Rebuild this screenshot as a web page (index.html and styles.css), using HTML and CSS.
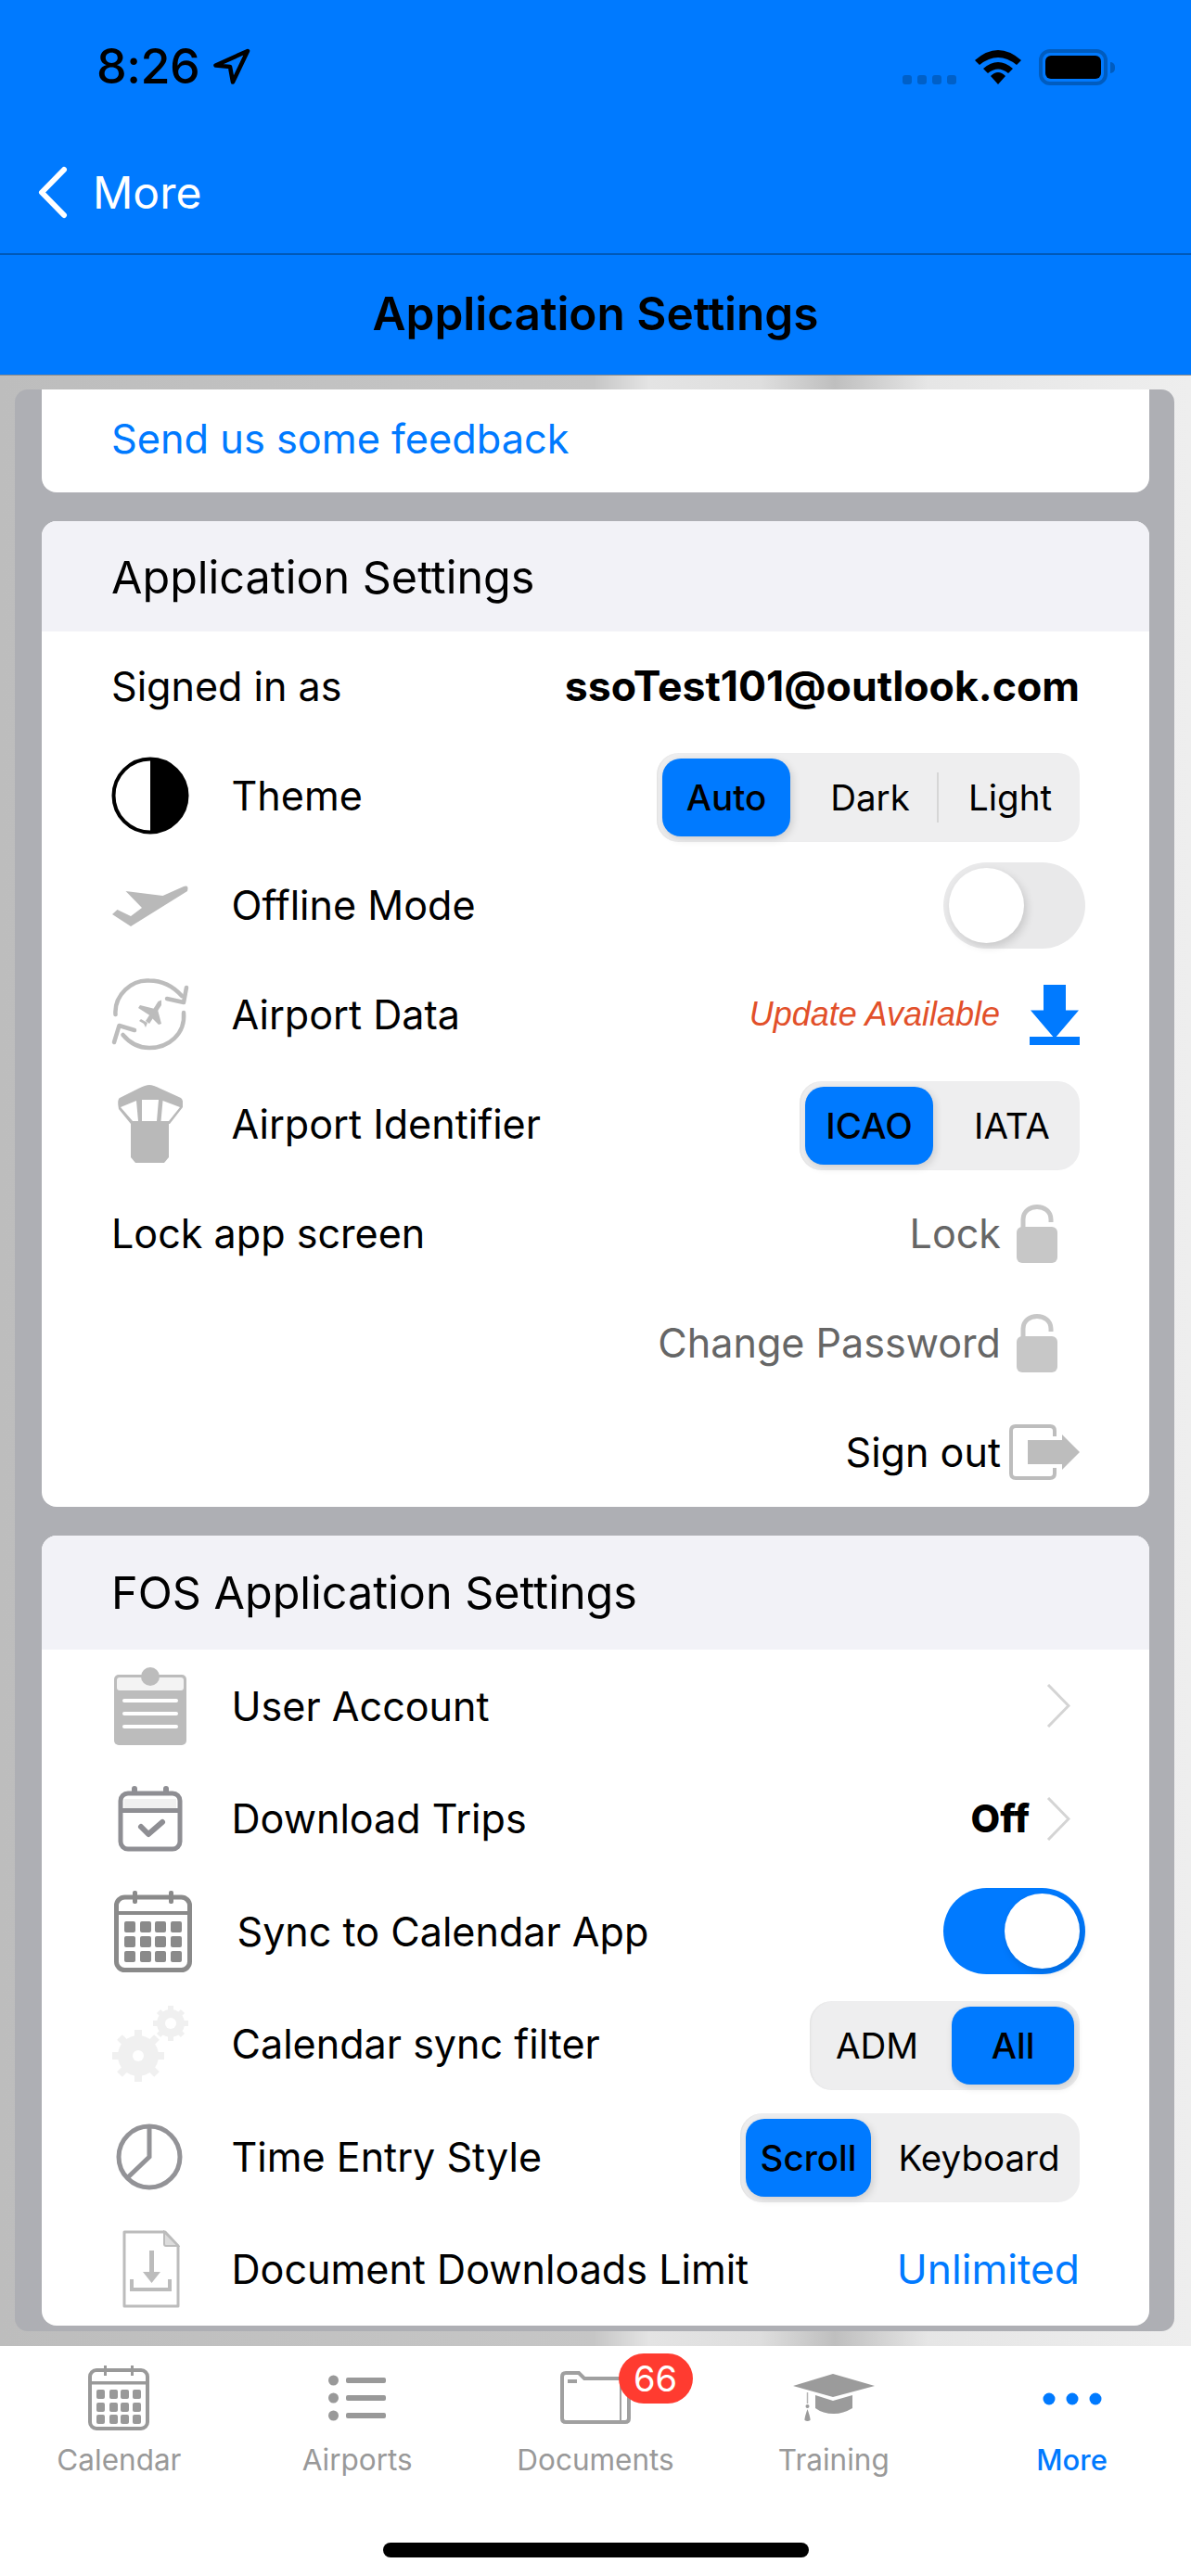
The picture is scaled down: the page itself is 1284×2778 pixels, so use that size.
FILE: index.html
```html
<!DOCTYPE html>
<html lang="en">
<head>
<meta charset="utf-8">
<title>Application Settings</title>
<link rel="stylesheet" href="styles.css">
</head>
<body>
<div class="phone">
  <header class="header">
    <div class="status">
      <div class="time-group">
        <span class="time">8:26</span>
        <svg class="loc" viewBox="0 0 40 40"><path d="M37 3 L2.500 18.500 L18 20 L21 36.500 Z" fill="none" stroke="#000" stroke-width="4.500" stroke-linejoin="round"/></svg>
      </div>
      <div class="status-right">
        <div class="cell"><i></i><i></i><i></i><i></i></div>
        <svg class="wifi" viewBox="0 0 50 37"><path d="M0 11 Q25 -11 50 11 L45 16 Q25 0 5 16 Z M9 20 Q25 6 41 20 L36 25 Q25 16 14 25 Z M17 28 Q25 20 33 28 L25 37 Z" fill="#000"/></svg>
        <div class="battery"><div class="battery-fill"></div></div>
        <div class="battery-cap"></div>
      </div>
    </div>
    <div class="nav">
      <svg class="back" viewBox="0 0 33 57"><path d="M29 4 L5 28.5 L29 53" fill="none" stroke="#fff" stroke-width="6" stroke-linecap="round" stroke-linejoin="round"/></svg>
      <span class="back-label">More</span>
    </div>
    <div class="title-bar">Application Settings</div>
  </header>

  <main class="content">
    <div class="panel">
      <section class="card card-first">
        <div class="feedback">Send us some feedback</div>
      </section>

      <section class="card card-app">
        <h2 class="card-head">Application Settings</h2>
        <div class="row">
          <span class="label">Signed in as</span>
          <span class="email">ssoTest101@outlook.com</span>
        </div>
        <div class="row">
          <span class="ico"><svg class="i-theme" viewBox="0 0 84 84"><circle cx="42" cy="42" r="39.5" fill="#fff" stroke="#000" stroke-width="4"/><path d="M42 2 A40 40 0 0 1 42 82 Z" fill="#000"/></svg></span>
          <span class="label">Theme</span>
          <div class="seg seg-theme">
            <span class="pill p-auto">Auto</span>
            <span class="opt o-dark">Dark</span>
            <span class="divider"></span>
            <span class="opt o-light">Light</span>
          </div>
        </div>
        <div class="row">
          <span class="ico"><svg class="i-plane" viewBox="120 953 84 45"><path d="M121 985 L126.500 980 L141 987 L153 978 L135.500 960 L175.500 965 L198 955 Q204 953 202 960 L141 998 Z" fill="#b9b9b9"/></svg></span>
          <span class="label">Offline Mode</span>
          <div class="toggle"><span class="knob"></span></div>
        </div>
        <div class="row">
          <span class="ico"><svg class="i-data" viewBox="0 0 84 78"><g fill="none" stroke="#bcbcbc" stroke-width="4.500" stroke-linecap="round" stroke-linejoin="round"><path d="M4.500 39 C3 18 22 1 41 2.500 C55 2.500 67 9 76 19"/><path d="M81 10 L78 26 L60 22"/><path d="M78 37 C80 60 62 75 41 75 C30 75 20 70 12.500 61"/><path d="M3 69 L8.500 51 L25 56"/></g><g fill="#bcbcbc"><path d="M50.500 25 L54 23.500 L54 29 L41 49 L37 46 Z"/><path d="M29 32 L31 29 L47 33 L43 41 Z"/><path d="M54 49 L51 50 L43 42 L50 34 Z"/><path d="M30 46 L32 44 L39 48 L37 53 L35 49 Z"/></g></svg></span>
          <span class="label">Airport Data</span>
          <span class="update">Update Available</span>
          <svg class="i-dl" viewBox="0 0 54 65"><path d="M15 0 H39 V29 H53 L27 61 L1 29 H15 Z" transform="scale(1 .95)" fill="#007aff"/><rect y="56" width="54" height="9" fill="#007aff"/></svg>
        </div>
        <div class="row">
          <span class="ico"><svg class="i-tower" viewBox="0 0 70 84"><path d="M34 0 Q38 0 46 4 L68 14 Q71 16 70 24 L56 42 H14 L1 26 Q-1 16 2 14 L22 4 Q30 0 34 0 Z" fill="#b9b9b9"/><path d="M3 24 L20 17 L22 39 L16 39 Z M26 16 H44 L42 39 H26 Z M48.500 17 L67 24 L55 39 L46.500 39 Z" fill="#fff"/><path d="M14 42 H55 V78 L50 84 H19 L14 78 Z" fill="#b9b9b9"/></svg></span>
          <span class="label">Airport Identifier</span>
          <div class="seg seg-air">
            <span class="pill p-icao">ICAO</span>
            <span class="opt o-iata">IATA</span>
          </div>
        </div>
        <div class="row">
          <span class="label">Lock app screen</span>
          <span class="muted">Lock</span>
          <svg class="i-lock" viewBox="0 0 44 64"><path d="M7 28 V17 C7 -1 37 -1 37 17 V20" fill="none" stroke="#c7c7c7" stroke-width="5"/><rect y="25" width="44" height="39" rx="6" fill="#c7c7c7"/></svg>
        </div>
        <div class="row">
          <span class="muted">Change Password</span>
          <svg class="i-lock" viewBox="0 0 44 64"><path d="M7 28 V17 C7 -1 37 -1 37 17 V20" fill="none" stroke="#c7c7c7" stroke-width="5"/><rect y="25" width="44" height="39" rx="6" fill="#c7c7c7"/></svg>
        </div>
        <div class="row">
          <span class="signout">Sign out</span>
          <svg class="i-out" viewBox="0 0 76 60"><path d="M49 13 V7 Q49 2 44 2 H7 Q2 2 2 7 V53 Q2 58 7 58 H44 Q49 58 49 53 V47" fill="none" stroke="#bdbdbd" stroke-width="4"/><path d="M20 17 H57 V11 L76 30 L57 49 V43 H20 Z" fill="#bdbdbd"/></svg>
        </div>
      </section>

      <section class="card card-fos">
        <h2 class="card-head head-fos">FOS Application Settings</h2>
        <div class="row row-fos">
          <span class="ico"><svg class="i-user" viewBox="0 0 78 84"><rect y="8" width="78" height="76" rx="5" fill="#bcbcbc"/><rect x="3" y="11" width="72" height="14" rx="3" fill="#f3f3f3"/><circle cx="39" cy="10" r="10" fill="#bcbcbc"/><rect x="9" y="34" width="60" height="4" rx="2" fill="#fff"/><rect x="9" y="48" width="60" height="4" rx="2" fill="#fff"/><rect x="9" y="62" width="60" height="4" rx="2" fill="#fff"/></svg></span>
          <span class="label">User Account</span>
          <svg class="i-chev" viewBox="0 0 26 47"><path d="M2 1 L24 23.500 L2 46" fill="none" stroke="#d4d4d4" stroke-width="3"/></svg>
        </div>
        <div class="row row-fos">
          <span class="ico"><svg class="i-trips" viewBox="0 0 70 71"><rect x="3" y="8" width="64" height="60" rx="8" fill="#fff" stroke="#8e8e93" stroke-width="5"/><rect x="7" y="14" width="56" height="10" fill="#f0f0f0"/><rect x="3" y="24" width="64" height="5" fill="#8e8e93"/><rect x="15" y="0" width="6" height="10" rx="3" fill="#8e8e93"/><rect x="49" y="0" width="6" height="10" rx="3" fill="#8e8e93"/><path d="M25 44 L33 52 L48 39" fill="none" stroke="#8e8e93" stroke-width="6" stroke-linecap="round" stroke-linejoin="round"/></svg></span>
          <span class="label">Download Trips</span>
          <span class="off">Off</span>
          <svg class="i-chev" viewBox="0 0 26 47"><path d="M2 1 L24 23.500 L2 46" fill="none" stroke="#d4d4d4" stroke-width="3"/></svg>
        </div>
        <div class="row row-fos">
          <span class="ico"><svg class="i-cal" viewBox="0 0 84 88"><rect x="2.500" y="7" width="79" height="78.500" rx="9" fill="#fff" stroke="#8a8a8a" stroke-width="5"/><rect x="2" y="22" width="80" height="4" fill="#8a8a8a"/><rect x="20" y="0" width="5" height="14" rx="2" fill="#8a8a8a"/><rect x="59" y="0" width="5" height="14" rx="2" fill="#8a8a8a"/><g fill="#8a8a8a"><rect x="11" y="33" width="12" height="12" rx="2"/><rect x="28" y="33" width="12" height="12" rx="2"/><rect x="44" y="33" width="12" height="12" rx="2"/><rect x="61" y="33" width="12" height="12" rx="2"/><rect x="11" y="49" width="12" height="12" rx="2"/><rect x="28" y="49" width="12" height="12" rx="2"/><rect x="44" y="49" width="12" height="12" rx="2"/><rect x="61" y="49" width="12" height="12" rx="2"/><rect x="11" y="65" width="12" height="12" rx="2"/><rect x="28" y="65" width="12" height="12" rx="2"/><rect x="44" y="65" width="12" height="12" rx="2"/><rect x="61" y="65" width="12" height="12" rx="2"/></g></svg></span>
          <span class="label label-sync">Sync to Calendar App</span>
          <div class="toggle toggle-on"><span class="knob"></span></div>
        </div>
        <div class="row row-fos">
          <span class="ico"><svg class="i-gear" viewBox="0 0 84 84"><g fill="#f0f0f0"><circle cx="29" cy="55" r="22"/><g stroke="#f0f0f0" stroke-width="8"><path d="M29 27 V83"/><path d="M1 55 H57"/><path d="M9 35 L49 75"/><path d="M49 35 L9 75"/></g><circle cx="64" cy="20" r="15"/><g stroke="#f0f0f0" stroke-width="6"><path d="M64 1 V39"/><path d="M45 20 H83"/><path d="M51 7 L77 33"/><path d="M77 7 L51 33"/></g></g><circle cx="29" cy="55" r="6" fill="#fff"/><circle cx="64" cy="20" r="6" fill="#fff"/></svg></span>
          <span class="label">Calendar sync filter</span>
          <div class="seg seg-cal">
            <span class="opt o-adm">ADM</span>
            <span class="pill p-all">All</span>
          </div>
        </div>
        <div class="row row-fos">
          <span class="ico"><svg class="i-time" viewBox="0 0 72 72"><circle cx="36" cy="36" r="33" fill="none" stroke="#939397" stroke-width="5"/><path d="M36 3 V36 L13 58" fill="none" stroke="#939397" stroke-width="5"/></svg></span>
          <span class="label">Time Entry Style</span>
          <div class="seg seg-time">
            <span class="pill p-scroll">Scroll</span>
            <span class="opt o-key">Keyboard</span>
          </div>
        </div>
        <div class="row row-fos">
          <span class="ico"><svg class="i-doc" viewBox="0 0 62 84"><path d="M2 2 H46 L60 17 V82 H2 Z" fill="#fff" stroke="#bcbcbc" stroke-width="3" stroke-linejoin="round"/><path d="M45 2 V15 Q45 17 47 17 H60 Z" fill="#dcdcdc" stroke="#bcbcbc" stroke-width="2"/><path d="M29 22 H34 V45 H41 L31.500 57 L22 45 H29 Z" fill="#bcbcbc"/><path d="M10 53 V64 H51 V53" fill="none" stroke="#bcbcbc" stroke-width="4"/></svg></span>
          <span class="label">Document Downloads Limit</span>
          <span class="link-val">Unlimited</span>
        </div>
      </section>
    </div>
  </main>

  <nav class="tabs">
    <div class="tab">
      <svg class="t-cal" viewBox="0 0 66 70"><rect x="2" y="5" width="62" height="63" rx="7" fill="none" stroke="#999" stroke-width="4"/><rect x="2" y="17" width="62" height="3.500" fill="#999"/><rect x="17" y="0" width="3" height="11" fill="#999"/><rect x="46" y="0" width="3" height="11" fill="#999"/><g fill="#999"><rect x="9" y="26" width="9" height="10" rx="2"/><rect x="23" y="26" width="9" height="10" rx="2"/><rect x="35" y="26" width="9" height="10" rx="2"/><rect x="48" y="26" width="9" height="10" rx="2"/><rect x="9" y="40" width="9" height="10" rx="2"/><rect x="23" y="40" width="9" height="10" rx="2"/><rect x="35" y="40" width="9" height="10" rx="2"/><rect x="48" y="40" width="9" height="10" rx="2"/><rect x="9" y="53" width="9" height="10" rx="2"/><rect x="23" y="53" width="9" height="10" rx="2"/><rect x="35" y="53" width="9" height="10" rx="2"/><rect x="48" y="53" width="9" height="10" rx="2"/></g></svg>
      <span class="tab-label">Calendar</span>
    </div>
    <div class="tab">
      <svg class="t-list" viewBox="0 0 62 50"><g fill="#999"><circle cx="5.500" cy="6" r="5.500"/><circle cx="5.500" cy="25" r="5.500"/><circle cx="5.500" cy="44" r="5.500"/><rect x="19" y="3" width="43" height="6" rx="2"/><rect x="19" y="22" width="43" height="6" rx="2"/><rect x="19" y="41" width="43" height="6" rx="2"/></g></svg>
      <span class="tab-label">Airports</span>
    </div>
    <div class="tab">
      <svg class="t-folder" viewBox="0 0 76 57"><path d="M2 6 Q2 2 6 2 H20 L26 8 H70 Q74 8 74 12 V51 Q74 55 70 55 H6 Q2 55 2 51 Z" fill="#fff" stroke="#a0a0a0" stroke-width="4"/><path d="M65 10 V55" stroke="#a0a0a0" stroke-width="2"/><rect x="8" y="9" width="10" height="4" fill="#a0a0a0"/></svg>
      <span class="badge">66</span>
      <span class="tab-label">Documents</span>
    </div>
    <div class="tab">
      <svg class="t-cap" viewBox="0 0 88 51"><path d="M43 0 L88 13 L43 25 L0 13 Z" fill="#9b9b9b"/><path d="M24 23 L43 29 L64 23 V37 Q54 43 44 43 Q32 43 24 37 Z" fill="#9b9b9b"/><path d="M15.500 20 V32" stroke="#b4b4b4" stroke-width="1.500"/><circle cx="15.500" cy="35" r="2" fill="#9b9b9b"/><path d="M15.500 38 Q19 48 18.500 50 Q15.500 52 12.500 50 Q12 48 15.500 38 Z" fill="#9b9b9b"/></svg>
      <span class="tab-label">Training</span>
    </div>
    <div class="tab tab-active">
      <svg class="t-more" viewBox="0 0 64 14"><g fill="#007aff"><circle cx="7" cy="7" r="6.500"/><circle cx="32" cy="7" r="6.500"/><circle cx="57" cy="7" r="6.500"/></g></svg>
      <span class="tab-label">More</span>
    </div>
  </nav>
  <div class="home-bar"></div>
</div>
</body>
</html>
```

FILE: styles.css
```css
* { box-sizing: border-box; }
html, body { margin: 0; padding: 0; }
body { font-family: Inter, "Liberation Sans", sans-serif; color: #000; background: #fff; }
.phone { width: 1284px; height: 2778px; position: relative; overflow: hidden; display: flex; flex-direction: column; }

/* header */
.header { background: #007aff; height: 405px; flex: none; border-bottom: 1px solid #8a8a8a; }
.status { height: 148px; padding: 50px 82px 0 104px; display: flex; justify-content: space-between; align-items: flex-start; }
.time-group { display: flex; align-items: center; gap: 15px; }
.time { font-size: 52px; line-height: 44px; font-weight: 500; letter-spacing: -.5px; }
.loc { width: 40px; height: 40px; }
.status-right { display: flex; align-items: center; padding-top: 3px; }
.cell { display: flex; gap: 6px; align-items: flex-end; height: 38px; margin-right: 20px; padding-bottom: 1px; }
.cell i { width: 10px; height: 10px; border-radius: 3px; background: #0060c8; }
.wifi { width: 50px; height: 37px; margin-right: 19px; }
.battery { width: 74px; height: 39px; border: 4px solid #005cbf; border-radius: 12px; padding: 3px; }
.battery-fill { width: 100%; height: 100%; background: #000; border-radius: 6px; }
.battery-cap { width: 5px; height: 12px; background: #005cbf; border-radius: 0 6px 6px 0; margin-left: 3px; }
.nav { height: 127px; border-bottom: 2px solid #0059b8; display: flex; align-items: center; padding-left: 40px; padding-bottom: 6px; }
.back { width: 33px; height: 57px; margin-right: 27px; }
.back-label { color: #fff; font-size: 48px; font-weight: 400; }
.title-bar { height: 129px; display: flex; align-items: center; justify-content: center; font-size: 49.5px; font-weight: 600; padding-bottom: 3px; }

/* content */
.content { height: 2125px; flex: none; padding: 15px 18px 16px 16px; background: linear-gradient(90deg, #bdbdbd 0, #c6c6c6 640px, #e4e4e4 700px, #dedede 820px, #bfbfbf 900px, #e6e6e6 1000px, #eeeeee 1284px); }
.panel { height: 100%; background: #aeafb4; border-radius: 14px; padding: 0 27px 5px 29px; display: flex; flex-direction: column; gap: 31px; overflow: hidden; }
.card { background: #fff; border-radius: 16px; overflow: hidden; flex: none; }
.card-first { height: 111px; border-radius: 0 0 16px 16px; }
.feedback { color: #007aff; font-size: 43.3px; padding: 27px 0 0 75px; line-height: 52px; }
.card-app { height: 1063px; }
.card-fos { height: 852px; }
.card-head { margin: 0; background: #f2f2f7; height: 119px; display: flex; align-items: center; padding-left: 75px; font-size: 48.5px; font-weight: 400; padding-top: 2px; }
.head-fos { height: 123px; padding-top: 0; }
.row { height: 118px; display: flex; align-items: center; padding: 0 75px; font-size: 43.1px; }
.row-fos { height: 121.500px; }
.ico { width: 129.500px; flex: none; display: flex; }
.label { margin-right: auto; white-space: nowrap; }
.label-sync { margin-left: 6px; }
.email { font-weight: 700; font-size: 44.6px; }
.update { font-family: "Liberation Sans", sans-serif; font-style: italic; color: #e2502a; font-size: 36px; margin-right: 32px; }
.muted { color: #666; margin-right: 17px; }
.row > .muted:first-child { margin-left: auto; }
.signout { margin-left: auto; margin-right: 9px; }
.off { font-weight: 800; font-size: 41px; margin-right: 18px; }
.link-val { color: #007aff; font-size: 44.3px; }

/* icons */
.i-theme { width: 84px; height: 84px; }
.i-plane { width: 84px; height: 45px; }
.i-data { width: 84px; height: 78px; }
.i-tower { width: 70px; height: 84px; margin-left: 7px; }
.i-dl { width: 54px; height: 65px; flex: none; }
.i-lock { width: 44px; height: 64px; flex: none; margin-right: 24px; }
.i-out { width: 76px; height: 60px; flex: none; }
.i-user { width: 78px; height: 84px; margin-left: 3px; }
.i-trips { width: 70px; height: 71px; margin-left: 7px; }
.i-cal { width: 84px; height: 88px; margin-left: 3px; }
.i-gear { width: 84px; height: 84px; }
.i-time { width: 72px; height: 72px; margin-left: 5px; }
.i-doc { width: 62px; height: 84px; margin-left: 12px; }
.i-chev { width: 26px; height: 47px; flex: none; margin-right: 10px; }

/* segmented */
.seg { flex: none; height: 96px; margin-top: 3px; background: #eeeeef; border-radius: 24px; padding: 6px; display: flex; align-items: center; font-size: 38.5px; box-shadow: inset 2px 0 2px -1px #e0e0e0; position: relative; }
.pill { height: 84px; border-radius: 20px; background: #007aff; display: flex; align-items: center; justify-content: center; font-weight: 500; box-shadow: 2px 3px 8px rgba(0, 0, 0, .14); flex: none; }
.opt { display: flex; justify-content: center; flex: none; }
.divider { width: 2px; height: 54px; background: #d6d6d6; flex: none; }
.seg-theme { width: 456px; }
.p-auto { width: 138px; }
.o-dark { width: 158px; padding-left: 14px; }
.o-light { width: 146px; padding-left: 8px; }
.seg-air { width: 302px; }
.p-icao { width: 138px; }
.o-iata { width: 152px; padding-left: 18px; }
.seg-cal { width: 291px; }
.o-adm { width: 147px; padding-right: 14px; }
.p-all { width: 132px; }
.seg-time { width: 366px; }
.p-scroll { width: 135px; }
.o-key { width: 219px; padding-left: 14px; }

/* toggles */
.toggle { width: 153px; height: 93px; border-radius: 47px; background: #e9e9ea; padding: 6px; margin-right: -6px; flex: none; }
.knob { display: block; width: 81px; height: 81px; border-radius: 50%; background: #fff; box-shadow: 3px 4px 10px rgba(0, 0, 0, .14); }
.toggle-on { background: #007aff; padding-left: 66px; }

/* tabs */
.tabs { height: 248px; flex: none; display: flex; background: #fff; }
.tab { flex: 1; display: flex; flex-direction: column; align-items: center; position: relative; height: 142px; }
.tab-label { color: #999; font-size: 31.500px; font-weight: 400; line-height: 38px; margin-top: auto; }
.tab-active .tab-label { color: #007aff; font-weight: 500; font-size: 31px; }
.tab svg { position: absolute; left: 50%; transform: translateX(-50%); }
.t-cal { width: 66px; height: 70px; top: 21px; }
.t-list { width: 62px; height: 50px; top: 31px; }
.t-folder { width: 76px; height: 57px; top: 27px; }
.t-cap { width: 88px; height: 51px; top: 30px; }
.t-more { width: 64px; height: 14px; top: 50px; }
.badge { position: absolute; left: 153px; top: 8px; width: 80px; height: 54px; background: #ff3b30; border-radius: 27px; color: #fff; font-size: 38px; display: flex; align-items: center; justify-content: center; }
.home-bar { position: absolute; left: 413px; top: 2742px; width: 459px; height: 16px; border-radius: 8px; background: #000; }
```
